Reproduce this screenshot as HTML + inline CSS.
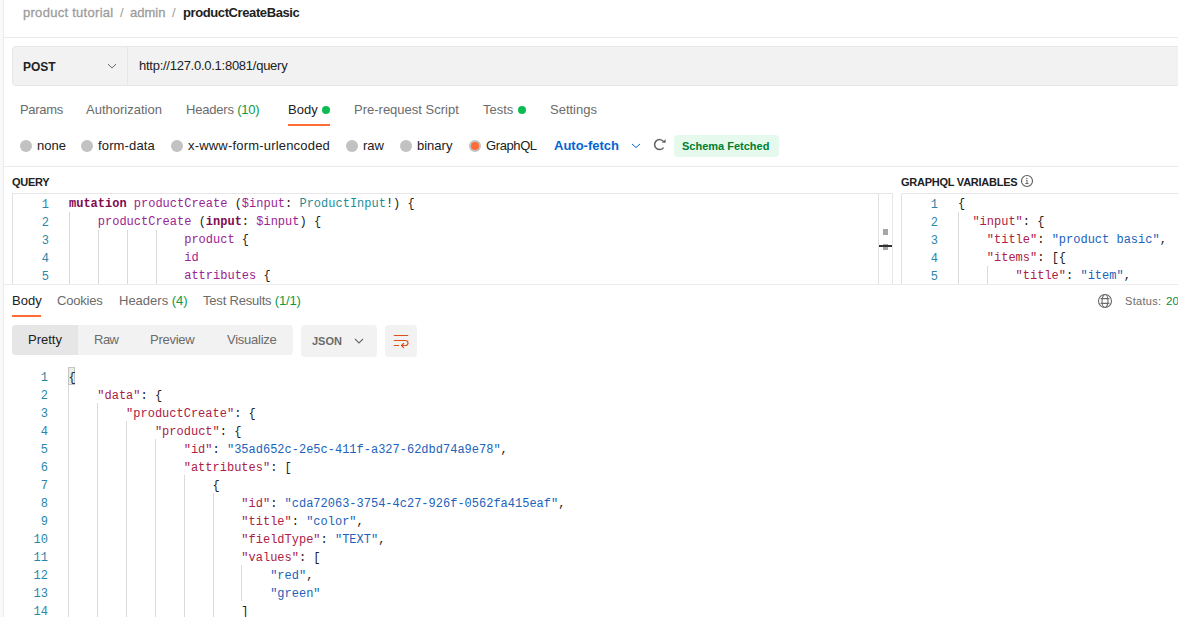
<!DOCTYPE html>
<html><head><meta charset="utf-8">
<style>
*{box-sizing:border-box;margin:0;padding:0}
html,body{width:1178px;height:617px;overflow:hidden;background:#fff}
body{font-family:"Liberation Sans",sans-serif;font-size:13px;color:#212121;position:relative}
.abs{position:absolute;white-space:nowrap}
.lside{position:absolute;left:0;top:0;width:3px;height:617px;background:#f9f9f9}
.vline{position:absolute;left:3px;top:0;width:1px;height:617px;background:#ebebeb}
.hline{position:absolute;left:4px;right:0;height:1px;background:#ebebeb}
.mono{font-family:"Liberation Mono",monospace;font-size:12px}
.ln{position:absolute;text-align:right;color:#2a86a8;font-family:"Liberation Mono",monospace;font-size:12px}
.code{position:absolute;font-family:"Liberation Mono",monospace;font-size:12px;white-space:pre;line-height:18px}
.guide{position:absolute;width:1px;background:#d9d9d9}
.radio{position:absolute;width:12px;height:12px;border-radius:50%;background:#c2c2c2}
.tab{color:#6b6b6b}
.g{color:#0a9a44}
.k{color:#ad2045}
.s{color:#2162bb}
.kw{color:#7d0b52;font-weight:bold}
.fn{color:#9b2393}
.ty{color:#1b8f9a}
.p{color:#212121}
</style></head><body>
<div class="lside"></div>
<div class="vline"></div>

<!-- breadcrumb -->
<div class="abs" style="left:23px;top:5px;font-size:13px;line-height:16px;color:#9c9c9c;letter-spacing:0.28px;-webkit-text-stroke:0.3px #9c9c9c">product tutorial</div><div class="abs" style="left:120px;top:5px;font-size:13px;line-height:16px;color:#9c9c9c">/</div><div class="abs" style="left:130px;top:5px;font-size:13px;line-height:16px;color:#9c9c9c;-webkit-text-stroke:0.3px #9c9c9c">admin</div><div class="abs" style="left:172px;top:5px;font-size:13px;line-height:16px;color:#9c9c9c">/</div><div class="abs" style="left:183px;top:5px;font-size:13px;line-height:16px;color:#212121;font-weight:bold;letter-spacing:-0.4px">productCreateBasic</div>
<div class="hline" style="top:37px"></div>

<!-- url bar -->
<div class="abs" style="left:12px;top:46px;width:1180px;height:40px;background:#f2f2f2;border:1px solid #e6e6e6;border-radius:4px"></div>
<div class="abs" style="left:127px;top:47px;width:1px;height:38px;background:#e6e6e6"></div>
<div class="abs" style="left:23px;top:59px;font-weight:bold;font-size:12px;line-height:16px;color:#212121">POST</div>
<svg class="abs" style="left:107px;top:63px" width="10" height="6" viewBox="0 0 10 6"><path d="M1 1 L5 5 L9 1" fill="none" stroke="#6b6b6b" stroke-width="1"/></svg>
<div class="abs" style="left:139px;top:58px;font-size:13px;line-height:16px;color:#212121;letter-spacing:-0.26px">http://127.0.0.1:8081/query</div>

<!-- request tabs -->
<div class="abs tab" style="left:20px;top:102px;line-height:16px;letter-spacing:-0.33px">Params</div>
<div class="abs tab" style="left:86px;top:102px;line-height:16px">Authorization</div>
<div class="abs tab" style="left:186px;top:102px;line-height:16px;letter-spacing:-0.2px">Headers <span class="g">(10)</span></div>
<div class="abs" style="left:288px;top:102px;line-height:16px;color:#212121">Body</div>
<div class="abs" style="left:322px;top:106px;width:8px;height:8px;border-radius:50%;background:#0cbb52"></div>
<div class="abs" style="left:288px;top:124px;width:42px;height:2px;background:#ff6c37"></div>
<div class="abs tab" style="left:354px;top:102px;line-height:16px">Pre-request Script</div>
<div class="abs tab" style="left:483px;top:102px;line-height:16px">Tests</div>
<div class="abs" style="left:518px;top:106px;width:8px;height:8px;border-radius:50%;background:#0cbb52"></div>
<div class="abs tab" style="left:550px;top:102px;line-height:16px">Settings</div>

<!-- body type radios -->
<div class="radio" style="left:20px;top:140px"></div>
<div class="abs" style="left:37px;top:138px;line-height:16px">none</div>
<div class="radio" style="left:81px;top:140px"></div>
<div class="abs" style="left:98px;top:138px;line-height:16px;letter-spacing:0.15px">form-data</div>
<div class="radio" style="left:171px;top:140px"></div>
<div class="abs" style="left:188px;top:138px;line-height:16px;letter-spacing:0.19px">x-www-form-urlencoded</div>
<div class="radio" style="left:346px;top:140px"></div>
<div class="abs" style="left:363px;top:138px;line-height:16px">raw</div>
<div class="radio" style="left:400px;top:140px"></div>
<div class="abs" style="left:417px;top:138px;line-height:16px">binary</div>
<div class="radio" style="left:469px;top:140px;background:#c2c2c2"><div style="position:absolute;left:2px;top:2px;width:8px;height:8px;border-radius:50%;background:#ff6c37"></div></div>
<div class="abs" style="left:486px;top:138px;line-height:16px;letter-spacing:-0.4px">GraphQL</div>
<div class="abs" style="left:554px;top:138px;line-height:16px;color:#0265d2;font-weight:bold">Auto-fetch</div>
<svg class="abs" style="left:631px;top:143px" width="10" height="6" viewBox="0 0 10 6"><path d="M1 1 L5 4.5 L9 1" fill="none" stroke="#0265d2" stroke-width="1"/></svg>
<svg class="abs" style="left:652px;top:138px" width="14" height="14" viewBox="0 0 14 14"><path d="M11.6 3.6 A5 5 0 1 0 11.6 9.6" fill="none" stroke="#5f5f5f" stroke-width="1.5"/><path d="M9.8 4.8 L13.6 1.2 L13.6 4.8 Z" fill="#5f5f5f"/></svg>
<div class="abs" style="left:674px;top:135px;width:105px;height:22px;background:#e5f9ec;border-radius:4px"></div>
<div class="abs" style="left:682px;top:139px;line-height:14px;font-size:11px;font-weight:bold;color:#007f31">Schema Fetched</div>

<div class="hline" style="top:166px"></div>

<!-- query -->
<div class="abs" style="left:12px;top:176px;font-size:11px;font-weight:bold;line-height:12px;color:#212121;letter-spacing:-0.25px">QUERY</div>
<div class="abs" style="left:901px;top:176px;font-size:11px;font-weight:bold;line-height:12px;color:#212121;letter-spacing:-0.25px">GRAPHQL VARIABLES</div><svg class="abs" style="left:1020px;top:174px" width="14" height="14" viewBox="0 0 14 14"><g fill="none" stroke="#5a5a5a"><circle cx="7" cy="7" r="5.5" stroke-width="1.1"/><path d="M7 6.2 V9.4 M5.4 9.5 H8.6 M6 6.2 H7.2" stroke-width="0.9"/></g><circle cx="6.9" cy="4.4" r="0.65" fill="#5a5a5a"/></svg>


<!-- query editor -->
<div class="abs" style="left:12px;top:193px;width:881px;height:92px;border:1px solid #e6e6e6;border-left-color:#e0e0e0;border-bottom:none;border-radius:0 2px 0 0"></div>
<div class="abs" style="left:878px;top:194px;width:1px;height:90px;background:#e0e0e0"></div>
<div class="abs" style="left:883px;top:229px;width:5px;height:6px;background:#a6a6a6"></div>
<div class="abs" style="left:883px;top:244px;width:5px;height:6px;background:#a6a6a6"></div>
<div class="abs" style="left:879px;top:245px;width:13px;height:2px;background:#333"></div>
<div class="ln" style="left:19px;top:196px;width:30px;line-height:18px">1<br>2<br>3<br>4<br>5</div>
<div class="guide" style="left:69px;top:212px;height:72px"></div>
<div class="guide" style="left:98px;top:230px;height:54px"></div>
<div class="guide" style="left:127px;top:230px;height:54px"></div>
<div class="guide" style="left:156px;top:230px;height:54px"></div>
<div class="code" style="left:69px;top:195px"><span class="kw">mutation</span> <span class="fn">productCreate</span> <span class="p">(</span><span class="fn">$input</span><span class="p">:</span> <span class="ty">ProductInput</span><span class="p">!) {</span>
    <span class="fn">productCreate</span> <span class="p">(</span><span class="kw">input</span><span class="p">:</span> <span class="fn">$input</span><span class="p">) {</span>
                <span class="fn">product</span> <span class="p">{</span>
                <span class="fn">id</span>
                <span class="fn">attributes</span> <span class="p">{</span></div>

<!-- variables editor -->
<div class="abs" style="left:901px;top:193px;width:300px;height:92px;border:1px solid #e6e6e6;border-left-color:#e0e0e0;border-bottom:none;border-radius:2px 0 0 0"></div>
<div class="ln" style="left:908px;top:196px;width:30px;line-height:18px">1<br>2<br>3<br>4<br>5</div>
<div class="guide" style="left:958px;top:212px;height:72px"></div>
<div class="guide" style="left:987px;top:266px;height:18px"></div>
<div class="code" style="left:958px;top:195px"><span class="p">{</span>
  <span class="k">"input"</span><span class="p">: {</span>
    <span class="k">"title"</span><span class="p">:</span> <span class="s">"product basic"</span><span class="p">,</span>
    <span class="k">"items"</span><span class="p">: [{</span>
        <span class="k">"title"</span><span class="p">:</span> <span class="s">"item"</span><span class="p">,</span></div>
<div class="hline" style="top:284px"></div>

<!-- response tabs -->
<div class="abs" style="left:12px;top:293px;line-height:16px;color:#212121">Body</div>
<div class="abs" style="left:12px;top:315px;width:29px;height:2px;background:#ff6c37"></div>
<div class="abs tab" style="left:57px;top:293px;line-height:16px;letter-spacing:-0.2px">Cookies</div>
<div class="abs tab" style="left:119px;top:293px;line-height:16px">Headers <span class="g">(4)</span></div>
<div class="abs tab" style="left:203px;top:293px;line-height:16px;letter-spacing:-0.2px">Test Results <span class="g">(1/1)</span></div>
<svg class="abs" style="left:1097px;top:293px" width="16" height="16" viewBox="0 0 16 16"><g fill="none" stroke="#6b6b6b" stroke-width="1.1"><circle cx="8" cy="8" r="6.5"/><ellipse cx="8" cy="8" rx="3" ry="6.5"/><path d="M3.6 5.6 H12.4 M3.6 10.4 H12.4"/></g></svg>
<div class="abs" style="left:1125px;top:293px;line-height:16px;font-size:11px;color:#6b6b6b;letter-spacing:0.3px">Status:</div><div class="abs" style="left:1166px;top:293px;line-height:16px;font-size:11.5px;color:#0f8a3c">200 OK</div>

<!-- response toolbar -->
<div class="abs" style="left:12px;top:325px;width:281px;height:30px;background:#f2f2f2;border-radius:4px"></div>
<div class="abs" style="left:12px;top:325px;width:66px;height:30px;background:#e6e6e6;border-radius:4px 0 0 4px"></div>
<div class="abs" style="left:28px;top:332px;line-height:16px;color:#212121">Pretty</div>
<div class="abs tab" style="left:94px;top:332px;line-height:16px;letter-spacing:-0.5px">Raw</div>
<div class="abs tab" style="left:150px;top:332px;line-height:16px;letter-spacing:-0.25px">Preview</div>
<div class="abs tab" style="left:227px;top:332px;line-height:16px;letter-spacing:-0.25px">Visualize</div>
<div class="abs" style="left:301px;top:325px;width:76px;height:32px;background:#f2f2f2;border-radius:4px"></div>
<div class="abs" style="left:312px;top:334px;line-height:14px;font-size:11px;font-weight:bold;color:#6b6b6b">JSON</div>
<svg class="abs" style="left:354px;top:338px" width="10" height="6" viewBox="0 0 10 6"><path d="M1 1 L5 5 L9 1" fill="none" stroke="#6b6b6b" stroke-width="1.1"/></svg>
<div class="abs" style="left:385px;top:325px;width:32px;height:32px;background:#f2f2f2;border-radius:4px"></div>
<svg class="abs" style="left:393px;top:333px" width="16" height="16" viewBox="0 0 16 16"><g fill="none" stroke="#d9501c" stroke-width="1.2" stroke-linecap="round" stroke-linejoin="round"><path d="M1.3 2.5 H14.7"/><path d="M1.3 7.5 H12.5 A2.5 2.5 0 0 1 12.5 12.5 H8.6"/><path d="M10.6 10.4 L8.5 12.5 L10.6 14.6"/><path d="M1.3 12.5 H5.6"/></g></svg>

<!-- response body -->
<div class="ln" style="left:10px;top:369px;width:38px;line-height:18px">1<br>2<br>3<br>4<br>5<br>6<br>7<br>8<br>9<br>10<br>11<br>12<br>13<br>14</div>
<div class="abs" style="left:68px;top:367px;width:7px;height:18px;border:1px solid #c4c4c4;background:#e8eee8"></div>
<div class="guide" style="left:68px;top:385px;height:232px"></div>
<div class="guide" style="left:97px;top:403px;height:214px"></div>
<div class="guide" style="left:126px;top:421px;height:196px"></div>
<div class="guide" style="left:155px;top:439px;height:178px"></div>
<div class="guide" style="left:184px;top:475px;height:142px"></div>
<div class="guide" style="left:213px;top:493px;height:124px"></div>
<div class="guide" style="left:241px;top:565px;height:36px"></div>
<div class="code" style="left:68.5px;top:368.5px"><span class="p">{</span>
    <span class="k">"data"</span><span class="p">: {</span>
        <span class="k">"productCreate"</span><span class="p">: {</span>
            <span class="k">"product"</span><span class="p">: {</span>
                <span class="k">"id"</span><span class="p">:</span> <span class="s">"35ad652c-2e5c-411f-a327-62dbd74a9e78"</span><span class="p">,</span>
                <span class="k">"attributes"</span><span class="p">: [</span>
                    <span class="p">{</span>
                        <span class="k">"id"</span><span class="p">:</span> <span class="s">"cda72063-3754-4c27-926f-0562fa415eaf"</span><span class="p">,</span>
                        <span class="k">"title"</span><span class="p">:</span> <span class="s">"color"</span><span class="p">,</span>
                        <span class="k">"fieldType"</span><span class="p">:</span> <span class="s">"TEXT"</span><span class="p">,</span>
                        <span class="k">"values"</span><span class="p">: [</span>
                            <span class="s">"red"</span><span class="p">,</span>
                            <span class="s">"green"</span>
                        <span class="p">]</span></div>
</body></html>
